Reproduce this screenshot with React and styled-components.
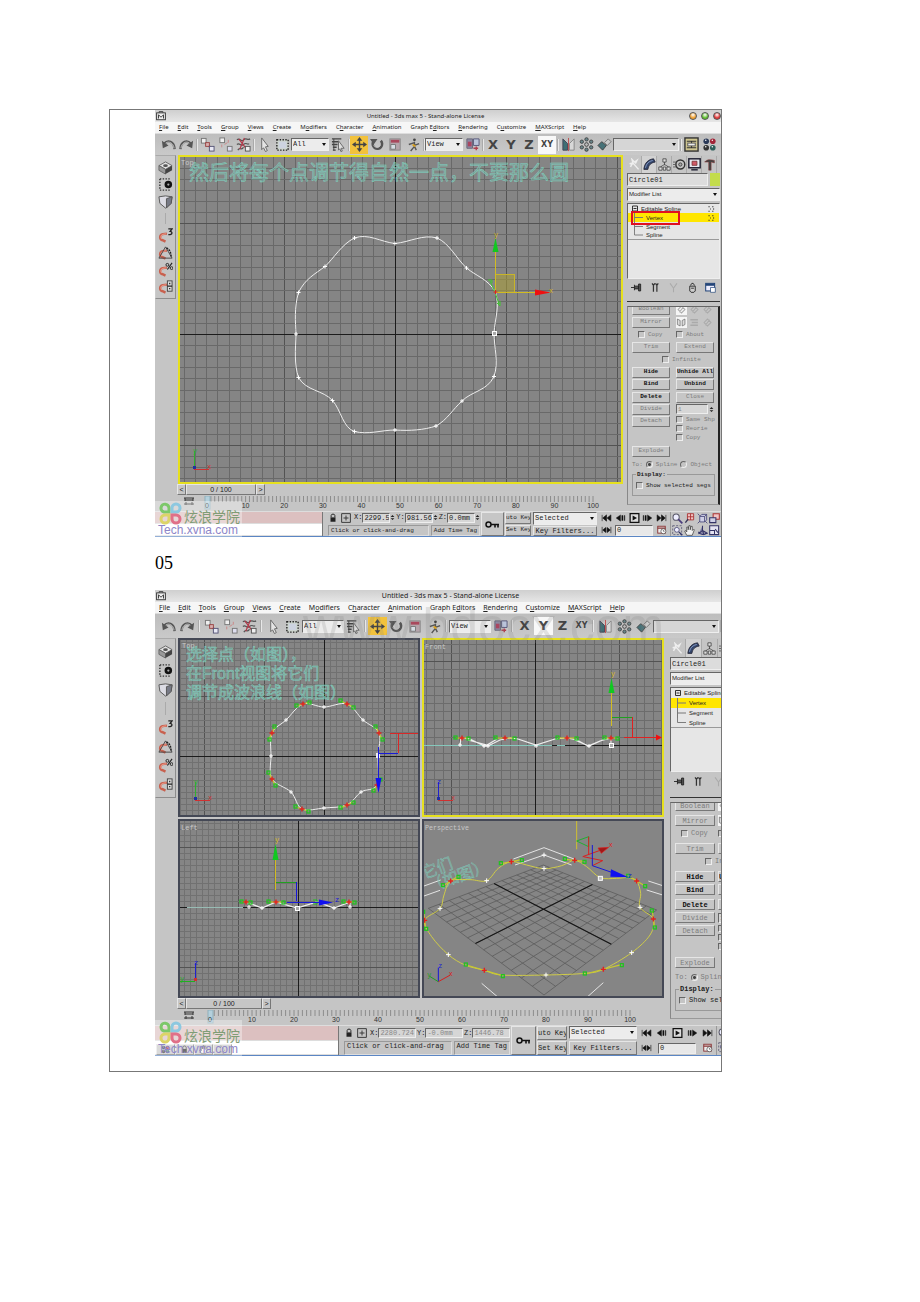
import React from "react";
import styled, { createGlobalStyle, css, ThemeProvider } from "styled-components";

const small = {
  menuFont: 6, codeFont: 6, toolbar: 22, tool: 18, sep: 3, select: 38, sideTool: 17,
  status: 25, mid: 154, key: 23, auto: 28, filter: 66, transport: 72, nav: 51,
  panel: 98, tab: 16, treeRow: 9, listHeight: 76, panelRow: 12, groupGap: 1, panelButton: 38, panelGap: 6,
  rolloutTop: 11, explodeTop: 5, thumb: 70, menuGap: 9,
};

const large = {
  menuFont: 7, codeFont: 7, toolbar: 25, tool: 19, sep: 5, select: 42, sideTool: 19,
  status: 30, mid: 168, key: 25, auto: 32, filter: 70, transport: 78, nav: 51,
  panel: 101, tab: 17, treeRow: 10, listHeight: 85, panelRow: 13, groupGap: 2, panelButton: 40, panelGap: 3,
  rolloutTop: 13, explodeTop: 4, thumb: 76, menuGap: 8,
};

const GlobalStyle = createGlobalStyle`
  * {
    box-sizing: border-box;
  }

  body {
    margin: 0;
    background: #fff;
    color: #222;
    font-family: "Liberation Sans", "Noto Sans CJK SC", sans-serif;
  }

  button, input, select {
    margin: 0;
    padding: 0;
    min-width: 0;
    font: inherit;
    color: inherit;
    border-radius: 0;
  }
`;

const mono = css`
  font-family: "Liberation Mono", "Noto Sans CJK SC", monospace;
  font-size: ${({ theme }) => theme.codeFont}px;
  line-height: 9px;
`;

const raised = css`
  border: 1px solid;
  border-color: #e6e6e6 #777 #777 #e6e6e6;
  background: #c6c6c6;
`;

const sunken = css`
  border: 1px solid;
  border-color: #666 #eee #eee #666;
`;

const Page = styled.main`
  padding: 109px 198px 200px 109px;
`;

const Cell = styled.article`
  border: 1px solid #777;
  padding: 0 0 15px 45px;
  overflow: hidden;
`;

const Step = styled.p`
  margin: 0;
  font-family: "Liberation Serif", serif;
  font-size: 18px;
  line-height: 53px;
  color: #000;
`;

const Clip = styled.div`
  position: relative;
  overflow: hidden;
`;

const AppWindow = styled.section`
  position: relative;
  margin-right: -${({ $overflow }) => $overflow || 0}px;
  background: #c5c5c5;
  border-bottom: 1px solid #5b86c4;
`;

const TitleBar = styled.header`
  display: flex;
  align-items: center;
  height: 12px;
  padding: 0 0 0 1px;
  background: linear-gradient(#cfcfcf, #e6e6e6);
  font-family: "Noto Sans", sans-serif;
  font-size: ${({ theme }) => theme.menuFont}px;
  line-height: 10px;

  h2 {
    flex: 1;
    margin: 0;
    padding-right: ${({ $shift }) => $shift}px;
    text-align: center;
    font: inherit;
  }
`;

const Lamp = styled.button`
  flex: none;
  width: 8px;
  height: 8px;
  margin-left: 4px;
  border: 1px solid #555;
  border-radius: 50%;
  background: radial-gradient(circle at 50% 30%, #fff, ${({ $color }) => $color} 60%);
`;

const MenuBar = styled.nav`
  display: flex;
  align-items: center;
  gap: ${({ theme }) => theme.menuGap}px;
  height: 11px;
  padding-left: 4px;
  background: #f6f6f6;
  font-family: "Noto Sans", sans-serif;
  font-size: ${({ theme }) => theme.menuFont}px;
  line-height: 9px;

  a {
    color: #222;
    text-decoration: none;
    white-space: nowrap;
  }
`;

const ToolBar = styled.div`
  display: flex;
  align-items: center;
  height: ${({ theme }) => theme.toolbar}px;
  padding-left: 4px;
  border-top: 1px solid #ddd;
  background: linear-gradient(#bdbdbd, #c9c9c9);
`;

const Tool = styled.button`
  flex: none;
  display: grid;
  place-items: center;
  width: ${({ theme }) => theme.tool}px;
  height: 18px;
  border: 0;
  background: ${({ $on }) => $on || "transparent"};

  svg {
    width: 15px;
    height: 15px;
  }
`;

const Divider = styled.i`
  flex: none;
  width: ${({ theme }) => theme.sep}px;
  height: 12px;
  background: linear-gradient(90deg, transparent 1px, #aaa 1px, #aaa 2px, #e8e8e8 2px, #e8e8e8 3px, transparent 3px);
`;

const selectWidths = {
  tool: ({ theme }) => `${theme.select}px`,
  sets: () => "66px",
  fill: () => "100%",
};

const SelectBox = styled.span`
  position: relative;
  flex: none;
  display: block;
  width: ${({ $kind = "tool", theme }) => selectWidths[$kind]({ theme })};
  height: 13px;

  select {
    display: block;
    width: 100%;
    height: 100%;
    padding: 0 8px 1px 1px;
    appearance: none;
    ${sunken}
    background: ${({ $kind }) => ($kind === "sets" ? "#d6d6d6" : "#ececec")};
    font-family: ${({ $sans }) => ($sans ? '"Liberation Sans", sans-serif' : '"Liberation Mono", monospace')};
    font-size: ${({ $sans }) => ($sans ? 6 : 7)}px;
  }

  &::after {
    content: "";
    position: absolute;
    right: 3px;
    top: 5px;
    border: 2px solid transparent;
    border-top: 3px solid #111;
    pointer-events: none;
  }
`;

const Main = styled.div`
  display: flex;
`;

const Work = styled.div`
  flex: 1;
  min-width: 0;
  padding-right: ${({ $pad }) => $pad || 0}px;
`;

const WorkRow = styled.div`
  display: flex;
  align-items: flex-start;
`;

const SideTools = styled.div`
  flex: none;
  width: 21px;
  margin: 0 2px 0 0;
  padding: 3px 0;
  border: 1px solid;
  border-color: #aaa #8d8d8d #8d8d8d #ccc;
  display: flex;
  flex-direction: column;
`;

const SideTool = styled.button`
  display: grid;
  place-items: center;
  height: ${({ theme }) => theme.sideTool}px;
  border: 0;
  background: transparent;

  svg {
    width: 15px;
    height: 15px;
  }
`;

const SideGap = styled.i`
  align-self: center;
  width: 1px;
  height: ${({ theme }) => theme.sideTool - 6}px;
  margin: 3px 0;
  background: #aaa;
`;

const Views = styled.div`
  flex: 1;
  display: grid;
  grid-template-columns: repeat(${({ $cols }) => $cols}, 1fr);
  gap: 2px;
`;

const View = styled.figure`
  margin: 0;
  border: 2px solid ${({ $active }) => ($active ? "#e6e01e" : "#444855")};
  background: #858585;

  svg {
    display: block;
    width: 100%;
    height: auto;
  }
`;

const Label = styled.text`
  font-family: "Liberation Mono", monospace;
  font-size: ${({ $size }) => $size || 7}px;
  fill: ${({ $color }) => $color || "#c8c8c8"};
`;

// outlined spline text lying in the scene
const Note = styled.text`
  font-family: "Liberation Sans", "Noto Sans CJK SC", sans-serif;
  font-size: ${({ $size }) => $size}px;
  fill: #82b4aa;
  fill-opacity: 0.45;
  stroke: #7ce0cc;
  stroke-opacity: 0.8;
  stroke-width: ${({ $line }) => $line || 0.5}px;
`;

const TimeRow = styled.div`
  display: flex;
  height: 12px;
  margin-left: 22px;
`;

const TimeButton = styled.button`
  ${raised}
  width: ${({ $width }) => $width || 9}px;
  height: 11px;
  line-height: 8px;
  font-family: "Liberation Sans", sans-serif;
  font-size: 7px;
  text-align: center;
`;

const Track = styled.svg`
  display: block;
  width: calc(100% - 23px);
  margin-left: 23px;
  height: 15px;

  text {
    font-size: 7px;
    fill: #333;
    text-anchor: middle;
  }
`;

const Panel = styled.aside`
  flex: none;
  width: ${({ theme }) => theme.panel}px;
  padding: 1px 1px 6px 4px;
  display: flex;
  flex-direction: column;
`;

const Tabs = styled.div`
  display: flex;
  height: ${({ theme }) => theme.tab + 1}px;
`;

const Tab = styled.button`
  flex: none;
  display: grid;
  place-items: center;
  width: ${({ theme }) => theme.tab - 1}px;
  border: solid #aaa;
  border-width: 0 1px 0 0;
  background: ${({ $on }) => ($on ? "#d2d2d2" : "transparent")};

  svg {
    width: 13px;
    height: 13px;
  }
`;

const NameRow = styled.div`
  display: flex;
  gap: 2px;
  height: 13px;
  margin: 0 0 2px;

  input {
    flex: 1;
    ${sunken}
    background: #dcdcdc;
    font-family: "Liberation Mono", monospace;
    font-size: 7px;
    padding-left: 1px;
  }
`;

const Swatch = styled.button`
  width: 10px;
  border: 0;
  background: #c3dc4c;
`;

const Tree = styled.ul`
  position: relative;
  flex: none;
  height: ${({ theme }) => theme.listHeight}px;
  margin: 2px 0 0;
  padding: 0;
  list-style: none;
  background: #e6e6e6;
  ${sunken}
  font-size: 6px;
`;

const Branch = styled.li`
  display: flex;
  align-items: center;
  gap: 3px;
  height: ${({ theme }) => theme.treeRow}px;
  padding-left: 4px;
  background: ${({ $on }) => ($on ? "#ffe600" : "transparent")};
  border-bottom: ${({ $last }) => ($last ? "1px solid #999" : "0")};
  white-space: nowrap;

  svg {
    flex: none;
    width: ${({ $leaf }) => ($leaf ? 11 : 6)}px;
    height: 100%;
  }

  svg:last-child {
    width: 7px;
    height: 6px;
    margin: 0 4px 0 auto;
  }
`;

const RedBox = styled.i`
  position: absolute;
  left: 3px;
  top: 7px;
  width: 49px;
  height: 14px;
  border: 2px solid #e01020;
`;

const StackTools = styled.div`
  display: flex;
  justify-content: space-between;
  align-items: center;
  height: ${({ theme }) => theme.panelRow + 3}px;
  margin-top: 1px;
  padding: 0 4px;

  button {
    border: 0;
    padding: 0;
    background: none;
  }

  svg {
    display: block;
    width: 11px;
    height: 11px;
  }
`;

const Rollout = styled.div`
  flex: 1;
  margin-top: ${({ theme }) => theme.rolloutTop}px;
  padding: 0 3px 0 4px;
  border: solid;
  border-width: 1px 2px 1px 1px;
  border-color: #666 #222 #999 #888;
  box-shadow: 0 -4px 0 #c5c5c5, 0 -5px 0 #333;
  display: flex;
  flex-direction: column;
  gap: ${({ theme }) => theme.groupGap}px;
  overflow: hidden;
  ${mono}
  color: #222;
`;

const Group = styled.div`
  flex: none;
  display: grid;
  grid-template-columns: repeat(2, ${({ theme }) => theme.panelButton}px);
  grid-auto-rows: ${({ theme }) => theme.panelRow}px;
  column-gap: ${({ theme }) => theme.panelGap}px;
  align-items: center;
`;

const CutGroup = styled(Group)`
  margin-top: -4px;
`;

const ExplodeGroup = styled(Group)`
  margin-top: ${({ theme }) => theme.explodeTop}px;
`;

const PanelButton = styled.button`
  ${raised}
  height: 11px;
  line-height: 8px;
  text-align: center;
  white-space: nowrap;
  overflow: hidden;
  color: ${({ disabled }) => (disabled ? "#7c7c7c" : "#111")};
  font-weight: ${({ disabled }) => (disabled ? 400 : 700)};
`;

const Check = styled.label`
  display: flex;
  align-items: center;
  gap: 3px;
  height: ${({ $tight }) => ($tight ? "9px" : "auto")};
  grid-column: ${({ $wide }) => ($wide ? "span 2" : "auto")};
  padding-left: ${({ $indent }) => $indent || 0}px;
  white-space: nowrap;
  color: ${({ $dark }) => ($dark ? "#222" : "#7c7c7c")};

  input {
    flex: none;
    width: 7px;
    height: 7px;
    appearance: none;
    border: 1px solid;
    border-color: #666 #eee #eee #666;
    border-radius: ${({ $round }) => ($round ? "50%" : 0)};
  }

  input[type="radio"]:checked {
    background: radial-gradient(#444 1px, transparent 2px);
  }
`;

const Stack = styled.div`
  grid-row: span 2;
  align-self: start;
`;

const IconRow = styled.div`
  display: flex;
  gap: 2px;
  align-items: center;

  svg {
    width: 11px;
    height: 11px;
  }

  svg:first-child {
    background: #f5f5f5;
  }
`;

const Spin = styled.label`
  display: flex;
  align-items: center;
  gap: 1px;

  input {
    flex: 1;
    width: 0;
    height: 10px;
    padding-left: 1px;
    ${sunken}
    background: #d6d6d6;
    color: ${({ $off }) => ($off ? "#888" : "#222")};
  }

  svg {
    flex: none;
    width: 5px;
    height: 9px;
  }
`;

const ToRow = styled.div`
  display: flex;
  gap: 3px;
  height: ${({ theme }) => theme.panelRow}px;
  align-items: center;
  color: #7c7c7c;
`;

const Display = styled.fieldset`
  margin: 0;
  padding: 3px 0 5px 3px;
  min-width: 0;
  border: 1px solid #999;

  legend {
    padding: 0 1px;
    font-weight: 700;
    line-height: 7px;
  }
`;

const StatusBar = styled.footer`
  display: flex;
  height: ${({ theme }) => theme.status}px;
  border-top: 1px solid #ddd;
  ${mono}
`;

const Column = styled.div`
  flex: none;
  width: ${({ $slot, theme }) => theme[$slot]}px;
  display: grid;
  grid-template-rows: 1fr 1fr;
  gap: 1px;
  padding: 0 1px;
`;

const Listener = styled.div`
  flex: 1;
  display: grid;
  grid-template-rows: 1fr 1fr;
  margin-right: 4px;
  border-right: 1px solid #777;

  input {
    width: 100%;
    border: 0;
    border-bottom: 1px solid #ddd;
    background: #dcc0c0;
  }

  input:last-child {
    background: #fff;
  }
`;

const Coords = styled.div`
  display: flex;
  align-items: center;
  gap: 1px;
  font-size: 7px;

  > svg {
    flex: none;
    width: 10px;
    height: 10px;
    margin-right: 2px;
  }

  label {
    flex: 1;
    gap: 0;
  }
`;

const Prompts = styled.div`
  display: flex;
  gap: 2px;

  span {
    flex: none;
    ${sunken}
    border-color: #999 #ddd #ddd #999;
    padding: 0 2px;
    white-space: nowrap;
    overflow: hidden;
  }

  span:first-child {
    flex: 1;
  }
`;

const KeyButton = styled.button`
  flex: none;
  display: grid;
  place-items: center;
  width: ${({ theme }) => theme.key}px;
  ${raised}

  svg {
    width: 15px;
    height: 9px;
  }
`;

const FlatButton = styled.button`
  ${raised}
  overflow: hidden;
  white-space: nowrap;
  line-height: 8px;
  font-size: ${({ $wide, theme }) => ($wide ? 7 : theme.codeFont)}px;
`;

const Transport = styled.div`
  display: flex;
  align-items: center;
  justify-content: space-between;
  padding: 0 2px;

  button {
    border: 0;
    background: none;
  }

  svg {
    display: block;
    width: 11px;
    height: 10px;
  }

  input {
    width: 38px;
    height: 11px;
    padding-left: 1px;
    ${sunken}
    background: #e8e8e8;
    font-size: 7px;
  }
`;

const NavTools = styled.div`
  flex: none;
  display: grid;
  grid-template-columns: repeat(4, 1fr);
  width: ${({ theme }) => theme.nav}px;
  border-left: 1px solid #999;

  button {
    display: grid;
    place-items: center;
    border: 0;
    background: none;
  }

  svg {
    width: 11px;
    height: 11px;
  }
`;

const Brand = styled.div`
  position: absolute;
  left: 0;
  bottom: 0;
  width: 87px;
  height: 36px;
  padding: 0 0 0 3px;
  background: rgba(255, 255, 255, 0.35);
  color: #7f9d75;
  font-size: 14px;
  line-height: 20px;

  div {
    display: flex;
    gap: 2px;
    height: 22px;
  }

  span {
    padding-top: 6px;
    white-space: nowrap;
  }

  svg {
    width: 24px;
    height: 24px;
  }

  p {
    margin: 0;
    font-size: 12px;
    line-height: 14px;
    color: #8e86c8;
  }
`;

const TaskIcons = styled.div`
  position: absolute;
  left: 1px;
  bottom: 1px;
  display: flex;

  button {
    ${raised}
    width: 19px;
    height: 11px;
    padding: 0;
  }

  svg {
    display: block;
    width: 9px;
    height: 9px;
    margin: auto;
  }
`;

const SiteMark = styled.div`
  position: absolute;
  left: 148px;
  top: 6px;
  font-size: 50px;
  line-height: 60px;
  color: rgba(130, 130, 130, 0.2);
  pointer-events: none;
`;

/* ---------- icons ---------- */

const magnet = (
  <>
    <path d="M9.500 6L5 6.500a3.300 3.300 0 0 0 0 6.500L8 14.500" stroke="#c8604e" strokeWidth="2.600" fill="none" />
    <path d="M8.500 6.200L5 6.800a3 3 0 0 0-1 5" stroke="#eda090" strokeWidth="1" fill="none" />
  </>
);

const art = {
  logo: <><rect x="1" y="3" width="14" height="11" fill="#eee" stroke="#333" strokeWidth="1.500" /><path d="M4 12V6l4 4 4-4v6M5 3V1h6v2" stroke="#444" strokeWidth="1.600" fill="none" /></>,
  undo: <><path d="M14.500 13C14 4 7 3 3.500 7" stroke="#555" strokeWidth="2.600" fill="none" /><path d="M1 4l1 8 6-3z" fill="#555" /><path d="M14 12C13 6 8 4 5 6.500" stroke="#ddd" strokeWidth="0.800" fill="none" /></>,
  redo: <><path d="M1.500 13C2 4 9 3 12.500 7" stroke="#555" strokeWidth="2.600" fill="none" /><path d="M15 4l-1 8-6-3z" fill="#555" /><path d="M2 12C3 6 8 4 11 6.500" stroke="#ddd" strokeWidth="0.800" fill="none" /></>,
  link: <><path d="M5 5l7 7" stroke="#a33" strokeWidth="2" /><rect x="1.500" y="1.500" width="5" height="5" fill="#eee" stroke="#777" /><rect x="6" y="6" width="4" height="4" fill="#d8b0b0" stroke="#944" /><rect x="10" y="10" width="5" height="5" fill="#e8e8f4" stroke="#557" /></>,
  unlink: <><rect x="2" y="1" width="5" height="5" fill="#eee" stroke="#777" /><rect x="10" y="10" width="5" height="5" fill="#dde" stroke="#777" /><path d="M4 8v3M7 8l3-2M11 3v3" stroke="#c88" /></>,
  bind: <><path d="M1 3c3-3 4 3 7 0s4 1 7-1M1 8c3-3 4 3 7 0s4 1 6-1M2 14c2-4 4 1 6-3" stroke="#555" strokeWidth="1.300" fill="none" /><path d="M3 2l9 12M9 1L4 13" stroke="#b23a4a" strokeWidth="1.300" /><rect x="10" y="10" width="5" height="5" fill="#eee" stroke="#555" /></>,
  arrow: <path d="M5 1l7 9-3 .500 2 4-2 1-2-4-2 2z" fill="#e4e4e4" stroke="#666" />,
  region: <><rect x="2" y="3" width="12" height="11" fill="#ccd4cc" stroke="#222" strokeWidth="1.500" strokeDasharray="1.500 1.500" /><rect x="4" y="5" width="8" height="7" fill="#cdd3e0" /></>,
  byName: <><path d="M1 2h10M1 5h7M1 8h6M2 11h4M2 14h3" stroke="#444" strokeWidth="1.500" /><path d="M3 2v12" stroke="#444" /><path d="M8 4l6 8h-3l1 3-1.500.500-1-3-1.500 1.500z" fill="#ddd" stroke="#666" /></>,
  move: <><path d="M8 2v12M2 8h12" stroke="#444" strokeWidth="1.500" /><path d="M8 0l3 4H5zM8 16l3-4H5zM0 8l4-3v6zM16 8l-4-3v6z" fill="#444" /></>,
  rotate: <><path d="M3.500 5a5 5 0 1 0 8-1" stroke="#555" strokeWidth="2.800" fill="none" /><path d="M0 2l8 0-4 6z" fill="#555" /><path d="M4 9a4 4 0 0 0 7 0" stroke="#ccc" fill="none" /></>,
  scale: <><rect x="2" y="2" width="11" height="12" fill="#b5a4ab" stroke="#888" /><path d="M3 8h5v5H3z" fill="#d6dde4" stroke="#777" /><path d="M3 3h9v3H3z" fill="#a9485d" /></>,
  person: <><circle cx="9" cy="3" r="1.500" fill="#444" /><path d="M9 5v5l-4 5M9 9l5-2M3 8l6-2M9 10l2 4" stroke="#555" strokeWidth="1.500" fill="none" /><path d="M7 8l3 2" stroke="#d8a020" strokeWidth="2" /></>,
  pivot: <><path d="M2 2h6v10H2z" fill="#8d89a4" stroke="#667" /><path d="M9 2h6v7H9z" fill="#bac4da" stroke="#557" /><path d="M9 12h5M12 10v4" stroke="#b04050" strokeWidth="1.500" /><path d="M3 5h4v5H3z" fill="#aa4660" /></>,
  mirror: <><path d="M2 2l5 5v7H2z" fill="#3f6f74" stroke="#445" /><path d="M8 1v14" stroke="#c05050" /><path d="M14 2L9 7v7h5z" fill="#d8d8d8" stroke="#888" /></>,
  array: <><circle cx="8" cy="8" r="2" fill="#bbb" stroke="#444" /><g fill="#69858a" stroke="#333" strokeWidth="0.800"><circle cx="8" cy="2.500" r="1.800" /><circle cx="8" cy="13.500" r="1.800" /><circle cx="3" cy="5" r="1.800" /><circle cx="13" cy="5" r="1.800" /><circle cx="3" cy="11" r="1.800" /><circle cx="13" cy="11" r="1.800" /></g></>,
  align: <><path d="M1 9l4-4 5 4-4 5z" fill="#477278" stroke="#444" /><path d="M8 6l4-4 3 3-4 4z" fill="#ccc" stroke="#777" /></>,
  track: <><rect x="1" y="1" width="14" height="14" fill="#cfc690" stroke="#333" strokeWidth="1.500" /><path d="M3 4.500h10M3 11.500h10M8 4v8" stroke="#333" strokeWidth="1.200" /><rect x="4" y="6.500" width="8" height="3" fill="#eee" stroke="#555" /></>,
  material: <><circle cx="4.500" cy="4.500" r="3" fill="#2b3a58" /><circle cx="11.500" cy="4.500" r="3" fill="#a02538" /><circle cx="4.500" cy="11.500" r="3" fill="#333" /><circle cx="11.500" cy="11.500" r="3" fill="#2c5f5a" /><g fill="#fff"><circle cx="4" cy="3.500" r=".8" /><circle cx="11" cy="3.500" r=".8" /><circle cx="4" cy="10.500" r=".8" /><circle cx="11" cy="10.500" r=".8" /></g></>,
  cube: <><path d="M1 6l7-4 7 4-7 4z" fill="#e2e2e2" stroke="#666" /><path d="M1 6v5l7 4v-5z" fill="#999" stroke="#666" /><path d="M15 6v5l-7 4v-5z" fill="#444" /><ellipse cx="8" cy="6" rx="2.500" ry="1.500" fill="#555" /></>,
  dots: <><path d="M2 2h12M2 14h12M2 2v12" stroke="#333" strokeWidth="1.500" strokeDasharray="1.500 1.500" /><circle cx="11" cy="8" r="4" fill="#111" /><circle cx="11" cy="8" r="1.200" fill="#aaa" /></>,
  shield: <><path d="M1 3l7-1 7 1-1 7-6 5-6-5z" fill="#dcdce4" stroke="#555" /><path d="M9 5l6-2-1 7-5 5z" fill="#777a86" stroke="#555" /></>,
  magnet3: <>{magnet}<path d="M11 1h4l-2 2.500c2 0 3 3 0 3.500h-2" stroke="#222" strokeWidth="1.400" fill="none" /></>,
  magnetA: <>{magnet}<path d="M1 14L8 2l7 12z" fill="none" stroke="#444" /><path d="M9 3c4 2 5 6 5 10" stroke="#222" strokeWidth="1.500" strokeDasharray="2 1" fill="none" /></>,
  magnetP: <>{magnet}<path d="M15 1l-5 7" stroke="#222" strokeWidth="1.200" /><circle cx="10" cy="3" r="1.500" fill="none" stroke="#222" /><circle cx="14.500" cy="6.500" r="1.500" fill="none" stroke="#222" /></>,
  magnetS: <>{magnet}<rect x="10" y="2" width="5" height="11" fill="#ddd" stroke="#444" /><path d="M10 7.500h5M12.500 4v1.500M12.500 9.500v1.500" stroke="#222" strokeWidth="1.300" /></>,
  create: <path d="M6 6l7 8M2 7l4-1-1-4 3 3 3-2-2 4M6 6L3 11" stroke="#eee" strokeWidth="1.800" fill="none" />,
  modify: <><path d="M1 14C2 6 6 2 13 1l2 4C9 6 7 9 6 14z" fill="#34466c" stroke="#223" /><path d="M3 12C4 7 7 4 12 3" stroke="#8fa4cc" fill="none" /></>,
  tree: <path d="M6 1h4v4H6zM8 5v4M3 11l5-3 5 3M1 11h4v4H1zM6.500 11h3v4h-3zM11 11h4v4h-4z" fill="#ddd" stroke="#444" />,
  motion: <><circle cx="9" cy="8" r="5.500" fill="none" stroke="#333" strokeWidth="1.800" /><circle cx="9" cy="8" r="2" fill="#aaa" stroke="#333" /><path d="M0 5h4M0 8h4M0 11h4" stroke="#555" /></>,
  display: <><rect x="1" y="1" width="14" height="11" fill="#e7e7f0" stroke="#223" strokeWidth="1.800" /><path d="M5 4h6v5H5z" fill="#d05868" stroke="#733" /><path d="M4 14.500h8" stroke="#334" strokeWidth="2" /></>,
  hammer: <path d="M2 5c3-4 8-3 12-2v3l-4-1v10H7V5z" fill="#444" stroke="#833" strokeWidth="0.600" />,
  pin: <path d="M0 8h5M5 4v8M5 6h6v4H5M11 3v10h3V3z" fill="#555" stroke="#222" strokeWidth="1.300" />,
  pipes: <path d="M5 3v11M10 3v11M3 2l2 3 2-3M8 2l2 3 2-3" stroke="#333" strokeWidth="1.800" fill="none" />,
  fork: <path d="M3 2l5 7 5-7M8 9v6" stroke="#aaa" strokeWidth="1.500" fill="none" />,
  trash: <path d="M4 6h8v7l-2 2H6l-2-2zM5 5l2-3h2l2 3M6 9h4" stroke="#222" strokeWidth="1.300" fill="#ccc" />,
  config: <><rect x="1" y="2" width="13" height="11" fill="#eef" stroke="#247" strokeWidth="1.500" /><path d="M1 4h13" stroke="#247" strokeWidth="3" /><path d="M8 8h7v7H8z" fill="#fff" stroke="#247" /></>,
  book: <path d="M2 3l4 2v8l-4-2zM13 3L9 5v8l4-2z" fill="#ddd" stroke="#666" />,
  lines: <path d="M2 4h11M4 8h9M2 12h11" stroke="#aaa" strokeWidth="2" />,
  ring: <path d="M3 8l5-5 5 5-5 5zM5 12l6-8" stroke="#aaa" strokeWidth="1.500" fill="none" />,
  spin: <><path d="M8 0l6 6H2zM8 16l6-6H2z" fill="#222" /></>,
  lock: <><path d="M4 7h8v7H4z" fill="#222" /><path d="M5 7V4c0-3 6-3 6 0v3" stroke="#222" strokeWidth="1.500" fill="none" /></>,
  plus: <path d="M1 1h14v14H1zM8 4v8M4 8h8" stroke="#333" strokeWidth="1.500" fill="none" />,
  zoom: <><circle cx="6" cy="6" r="4.500" fill="#eef" stroke="#556" strokeWidth="1.500" /><path d="M9 9l6 6" stroke="#4a3c7c" strokeWidth="2.500" /></>,
  zoomAll: <><path d="M5 1h9v9H5zM5 5.500h9M9.500 1v9" fill="#f2c4c4" stroke="#a33" strokeWidth="1.300" /><path d="M6 9l-4 5" stroke="#335" strokeWidth="2" /></>,
  extents: <path d="M4 5h7v8H4zM4 5l3-3h7l-3 3M14 2v8l-3 3M1 1l3 3M15 15l-3-3M1 15l3-3" fill="#cfd0e6" stroke="#447" strokeWidth="1.200" />,
  extentsAll: <><path d="M6 1h9v8H6z" fill="#f2c4c4" stroke="#a33" strokeWidth="1.500" /><path d="M1 7h9v7H1z" fill="#cfd0e6" stroke="#336" strokeWidth="1.500" /></>,
  zoomBox: <><rect x="1" y="1" width="13" height="13" fill="none" stroke="#446" strokeDasharray="3 2" /><circle cx="7" cy="7" r="3.500" fill="#eef" stroke="#336" /><path d="M10 10l5 5" stroke="#336" strokeWidth="2" /></>,
  hand: <path d="M4 15L1 9l2-1 1 2V3h2v4l1-6h2v6l1-5h2v6l2-2 1 1-3 8z" fill="#f4f4f4" stroke="#333" />,
  orbit: <path d="M8 1v7l-6 5M8 8l7 4-5 2zM2 10c3 5 9 5 12 1" fill="#88a" stroke="#336" strokeWidth="1.500" />,
  minmax: <path d="M1 1h13v13H1zM1 8h7v6M9 6l4 5" fill="#e4e4f2" stroke="#336" strokeWidth="1.500" />,
  time: <><rect x="2" y="2" width="12" height="11" fill="#eee" stroke="#833" strokeWidth="1.500" /><path d="M2 5h12" stroke="#833" strokeWidth="2" /><circle cx="11" cy="10" r="4" fill="#fff" stroke="#333" /><path d="M11 8v2h2" stroke="#333" fill="none" /></>,
  first: <path d="M1 3v10M8 3v10L2 8zM15 3v10L9 8z" fill="#111" stroke="#111" />,
  prev: <path d="M8 3v10L1 8zM10 4h2v8h-2zM14 4h1v8h-1z" fill="#111" stroke="#111" strokeWidth="0.600" />,
  play: <><rect x="1" y="1" width="14" height="14" fill="#ddd" stroke="#111" strokeWidth="2" /><path d="M5 4v8l7-4z" fill="#111" /></>,
  next: <path d="M8 3v10l7-5zM4 4h2v8H4zM1 4h1v8H1z" fill="#111" stroke="#111" strokeWidth="0.600" />,
  last: <path d="M15 3v10M8 3v10l6-5zM1 3v10l6-5z" fill="#111" stroke="#111" />,
  keyMode: <path d="M1 3v10M15 3v10M7 4v8L2 8zM9 4v8l5-4z" fill="#111" stroke="#111" />,
};

const Icon = ({ name }) => <svg viewBox="0 0 16 16" width="10" height="10" aria-hidden="true">{art[name]}</svg>;

const AxisName = styled.span`
  font-family: "DejaVu Sans", sans-serif;
  font-size: ${({ $pair }) => ($pair ? 8 : 13)}px;
  line-height: 14px;
  font-weight: 700;
  color: #444;
`;

/* ---------- viewport drawing ---------- */

// closed Catmull-Rom curve through the points
const curve = (pts) => {
  const at = (i) => pts[(i + pts.length) % pts.length];
  let d = `M${pts[0]}`;
  pts.forEach((p, i) => {
    const [a, b, c] = [at(i - 1), at(i + 1), at(i + 2)];
    d += `C${p[0] + (b[0] - a[0]) / 6} ${p[1] + (b[1] - a[1]) / 6} ${b[0] - (c[0] - p[0]) / 6} ${b[1] - (c[1] - p[1]) / 6} ${b[0]} ${b[1]}`;
  });
  return d;
};

// lines are snapped to the middle of a pixel
const snap = (n) => Math.floor(n) + 0.5;

const Grid = ({ x, y, w, h, cx, cy, step, ink = "#717171" }) => {
  const lines = [];
  const color = (i) => (i % 10 === 0 ? "#535353" : ink);
  for (let i = Math.ceil((x - cx) / step); cx + i * step < x + w; i++) {
    lines.push(<path key={`v${i}`} d={`M${snap(cx + i * step)} ${y}v${h}`} stroke={color(i)} />);
  }
  for (let i = Math.ceil((y - cy) / step); cy + i * step < y + h; i++) {
    lines.push(<path key={`h${i}`} d={`M${x} ${snap(cy + i * step)}h${w}`} stroke={color(i)} />);
  }
  lines.push(<path key="axis" d={`M${cx} ${y}v${h}M${x} ${cy}h${w}`} stroke="#1c1c1c" />);
  return <g strokeWidth="1">{lines}</g>;
};

const Crosses = ({ pts, color = "#fff", r = 2, width = 1 }) => (
  <path d={pts.map(([x, y]) => `M${x - r} ${y}h${2 * r}M${x} ${y - r}v${2 * r}`).join("")} stroke={color} strokeWidth={width} />
);

// green bezier handles on both sides of a selected vertex
const Handles = ({ pts, unit = 1 }) => pts.map(([x, y, dx, dy]) => (
  <g key={`${x}-${y}`} fill="none" stroke="#1fc41f" strokeWidth={1.2 * unit}>
    <path d={`M${x - dx} ${y - dy}L${x + dx} ${y + dy}`} stroke="#c8c830" />
    <rect x={x - dx - 2 * unit} y={y - dy - 2 * unit} width={3 * unit} height={3 * unit} />
    <rect x={x + dx - unit} y={y + dy - unit} width={3 * unit} height={3 * unit} />
    <Crosses pts={[[x, y]]} color="#e02020" r={2.5 * unit} width={1.4 * unit} />
  </g>
));

const Tripod = ({ x, y, up = "#2020d0", side = "#d03030", left, upName, sideName }) => (
  <g fill="none">
    <path d={`M${x + 0.5} ${y}v-18`} stroke={up} />
    <path d={`M${x} ${y + 0.5}h${left ? -15 : 15}`} stroke={side} />
    <rect x={x - 1} y={y - 3} width="3" height="3" fill={left ? "#d03030" : "#2030a0"} />
    <Label x={x - 1} y={y - 16} $color={up}>{upName}</Label>
    <Label x={left ? x - 15 : x + 13} y={y} $color={side}>{sideName}</Label>
  </g>
);

const BIG = [
  [395, 243.5], [354.5, 238], [325, 266.5], [298.5, 292.5], [296, 334], [298.5, 377.5],
  [332.5, 400.5], [354.5, 431.5], [395, 430], [436, 426], [462, 401], [494, 376.5],
  [494, 333], [466.5, 268], [437, 238],
];

const BIG_PATH = "M395 243.500C381 242 368 233 354.500 238C342 244 334 258 325 266.500C315 274 305 279 298.500 292.500C294 308 295.500 322 296 334C295.500 350 294 364 298.500 377.500C306 391 323 390 332.500 400.500C341 410 343 428 354.500 431.500C368 435 382 430 395 430C410 431 424 430 436 426C447 420 453 409 462 401C472 391 487 391 494 376.500C499 362 494 348 494 333C495 318 500 306 495.500 292C488 279 476 276 466.500 268C456 258 449 243 437 238C423 234 410 242 395 243.500Z";

const SMALL_WHITE = [[324, 707], [363, 720], [286, 720], [271, 756], [291, 792], [324, 808], [361, 792]];
const SMALL_RED = [
  [303, 704, 6, -2], [347, 704, 6, 3], [379, 733, 3, 6], [272, 733, -3, 6],
  [272, 779, 3, 6], [302, 809, 6, 2], [347, 805, 6, -3], [377, 785, 3, -6],
];

const BigTop = () => (
  <View $active>
    <svg viewBox="180 157 441 325" role="img" aria-label="Top">
      <Grid x={180} y={157} w={441} h={325} cx={395.5} cy={334.5} step={11.1} ink="#696969" />
      <Label x="181" y="165">Top</Label>
      <Note x="189" y="180" $size={20}>然后将每个点调节得自然一点，不要那么圆</Note>
      <path d={BIG_PATH} fill="none" stroke="#ededed" />
      <Crosses pts={BIG} />
      <rect x="492.500" y="331.500" width="4" height="4" fill="#aaa" stroke="#fff" />
      <rect x="495.500" y="274.500" width="19" height="18" fill="#a89d3c" fillOpacity=".6" stroke="#c8b428" />
      <path d="M495.500 292V250M495.500 292.500H538" stroke="#d2bc20" fill="none" />
      <path d="M495.500 238l3 14h-6z" fill="#10c820" />
      <path d="M551 292.500l-16-3v6z" fill="#ee1010" />
      <Label x="494" y="237" $color="#d8b820">y</Label>
      <Label x="549" y="293" $color="#d8b820">x</Label>
      <path d="M490 281l5 11 4 12M488 280h4v3M497 303l3 3v-5" stroke="#40c830" fill="none" />
      <Crosses pts={[[495.5, 292]]} color="#e02020" />
      <Tripod x={194} y={469} up="#30b030" upName="y" sideName="x" />
    </svg>
  </View>
);

const SmallTop = () => (
  <View>
    <svg viewBox="180 640 238 175" role="img" aria-label="Top">
      <Grid x={180} y={640} w={238} h={175} cx={324.5} cy={756.5} step={6} />
      <Label x="182" y="648">Top</Label>
      {["选择点（如图），", "在Front视图将它们", "调节成波浪线（如图）"].map((line, i) => (
        <Note key={line} x="186" y={660 + i * 19} $size={16}>{line}</Note>
      ))}
      <path
        d={curve([[324, 707], [347, 704], [363, 720], [379, 733], [378, 756], [377, 785], [361, 792], [347, 805], [324, 808], [302, 809], [291, 792], [272, 779], [271, 756], [272, 733], [286, 720], [303, 704]])}
        fill="none" stroke="#eee"
      />
      <Handles pts={SMALL_RED} />
      <Crosses pts={SMALL_WHITE} />
      <rect x="376" y="753" width="4" height="5" fill="#eee" />
      <path d="M390 733.500h28M398.500 733v20" stroke="#d82828" fill="none" />
      <path d="M398 753.500h-20M378.500 747v32" stroke="#1818d8" fill="none" />
      <path d="M378.500 793l-3-15h6z" fill="#1010f0" />
      <Tripod x={195} y={800} up="#30b030" upName="y" sideName="x" />
    </svg>
  </View>
);

const Front = () => (
  <View $active>
    <svg viewBox="424 640 238 175" role="img" aria-label="Front">
      <Grid x={424} y={640} w={238} h={175} cx={535.5} cy={745.5} step={8.4} ink="#6c6c6c" />
      <Label x="425" y="649">Front</Label>
      <path d="M424 745.500h128M557 745.500h8" stroke="#86c8bc" />
      <path d="M460 745l1-7 9 1 14 7 4 0 12-6 10-2 8 1 18 6 19-6 12-1 10 2 11 6 12-5 11-3v9M468 740l19 5 10-6M575 740l14 6 18-8" fill="none" stroke="#eee" strokeWidth="1.200" />
      <Handles pts={[[462, 738, 6, 0], [505, 738, 9, 0], [567, 738, 9, 0], [611, 738, 6, 0]]} />
      <Crosses pts={[[460, 745], [484, 746], [488, 746], [536, 746], [589, 746]]} />
      <rect x="609.500" y="743.500" width="4" height="4" fill="#aaa" stroke="#fff" />
      <path d="M611.500 726v-36" stroke="#d2bc20" />
      <path d="M611.500 678l3 15h-6z" fill="#10c820" />
      <path d="M612 717.500h20" stroke="#20a020" />
      <path d="M632.500 717v20M624 737.500h32" stroke="#e02020" />
      <path d="M662 737.500l-6-3v6z" fill="#f01010" />
      <Label x="611" y="676" $color="#d8b820">y</Label>
      <Tripod x={438} y={800} upName="z" sideName="x" />
    </svg>
  </View>
);

const Left = () => (
  <View>
    <svg viewBox="180 822 238 175" role="img" aria-label="Left">
      <Grid x={180} y={822} w={238} h={175} cx={298.5} cy={908.5} step={6} />
      <Label x="181" y="831">Left</Label>
      <path d="M187 908.500h56" stroke="#98bcb4" />
      <path d="M246 903l16 6 14-6 21 6 20-6 17 6 16-6v5" fill="none" stroke="#eee" strokeWidth="1.200" />
      <Handles pts={[[246, 903, 4, 0], [276, 903, 7, 0], [349, 903, 5, 0]]} />
      <path d="M313 901h4v4h-4" fill="none" stroke="#1fc41f" />
      <Crosses pts={[[249, 908], [262, 909], [334, 909], [350, 908]]} />
      <rect x="295.500" y="907.500" width="4" height="4" fill="#aaa" stroke="#fff" />
      <path d="M275.500 891v-32" stroke="#d2bc20" />
      <path d="M275.500 845l3 16h-6z" fill="#10c820" />
      <path d="M276 883.500h20" stroke="#20a020" />
      <path d="M296.500 883v19M287 903.500h32" stroke="#1818d8" />
      <path d="M333 903.500l-14-3v6z" fill="#1010f0" />
      <Label x="275" y="843" $color="#d8b820">y</Label>
      <Label x="335" y="903" $color="#1818d8">z</Label>
      <Tripod x={195} y={982} left side="#20b020" upName="z" sideName="y" />
    </svg>
  </View>
);

// ground plane seen from the camera: unit square mapped to the four corners
const ground = (() => {
  const [[x0, y0], [x1, y1], [x2, y2], [x3, y3]] = [[370, 150], [710, 285], [372, 540], [25, 280]];
  const [dx1, dx2, sx] = [x1 - x2, x3 - x2, x0 - x1 + x2 - x3];
  const [dy1, dy2, sy] = [y1 - y2, y3 - y2, y0 - y1 + y2 - y3];
  const det = dx1 * dy2 - dx2 * dy1;
  const g = (sx * dy2 - dx2 * sy) / det;
  const h = (dx1 * sy - sx * dy1) / det;
  return (u, v) => {
    const w = g * u + h * v + 1;
    return [
      ((x1 - x0 + g * x1) * u + (x3 - x0 + h * x3) * v + x0) / w,
      ((y1 - y0 + g * y1) * u + (y3 - y0 + h * y3) * v + y0) / w,
    ];
  };
})();

const Perspective = () => {
  const n = 14;
  const lines = Array.from({ length: n + 1 }, (_, i) => i / n);
  return (
    <View>
      <svg viewBox="12 18 714 525" role="img" aria-label="Perspective">
        <g strokeWidth="2.500" stroke="#5e5e5e">
          {lines.map((t) => <path key={t} d={`M${ground(t, 0)}L${ground(t, 1)}M${ground(0, t)}L${ground(1, t)}`} />)}
        </g>
        <path d={`M${ground(0.5, 0)}L${ground(0.5, 1)}M${ground(0, 0.5)}L${ground(1, 0.5)}`} stroke="#151515" strokeWidth="3.500" />
        <Label x="15" y="44" $size={20}>Perspective</Label>
        <g fill="none" stroke="#e4e4e4" strokeWidth="3">
          <path d="M280 132l92-34 90 34M285 150l87-30 83 30M12 213l50-18M12 243l48-17M685 198l43 14M680 225l48 15M185 505l47 40M550 503l-47 42" />
        </g>
        <Note x="12" y="192" transform="rotate(-20 12 192)" $size={48} $line={1}>它们</Note>
        <Note x="30" y="232" transform="rotate(-20 30 232)" $size={48} $line={1}>（如图）</Note>
        <path
          d={curve([[274, 140], [320, 150], [372, 161], [425, 152], [464, 136], [500, 155], [541, 188], [590, 190], [625, 188], [650, 198], [662, 235], [660, 277], [700, 312], [690, 360], [635, 413], [550, 463], [495, 475], [378, 480], [245, 480], [193, 466], [135, 450], [85, 419], [35, 365], [14, 316], [60, 281], [72, 240], [92, 198], [150, 194], [200, 197], [235, 160]])}
          fill="none" stroke="#d0cc48" strokeWidth="3"
        />
        <Handles
          unit={3}
          pts={[[274, 140, 30, -6], [464, 136, 28, 3], [92, 198, 22, -14], [650, 198, 24, 14], [700, 312, 3, 24], [550, 463, 54, -14], [193, 466, 54, 16], [14, 316, 3, 24]]}
        />
        <Crosses pts={[[372, 161], [372, 120], [200, 197], [60, 281], [85, 419], [378, 480], [635, 413], [660, 277]]} r={7} width={3} />
        <rect x="535" y="184" width="12" height="12" fill="#bbb" stroke="#fff" strokeWidth="3" />
        <path d="M470 18v85" stroke="#d0c030" strokeWidth="3" />
        <path d="M470 78l36-13v30z" fill="none" stroke="#20b030" strokeWidth="3" />
        <path d="M506 65v55M488 125l55-20M490 125l58 12-31 15" fill="none" stroke="#d82020" strokeWidth="3" />
        <path d="M534 99l32-2-22 18z" fill="#a01818" stroke="#e02020" strokeWidth="2" />
        <path d="M517 90v62l58 20" fill="none" stroke="#1818d8" strokeWidth="3" />
        <path d="M573 163l52 24-54-2z" fill="#1010f0" />
        <Label x="566" y="97" $size={20} $color="#e02020">x</Label>
        <Label x="624" y="190" $size={20} $color="#1818d8">z</Label>
        <g fill="none" strokeWidth="3">
          <path d="M55 500v-42" stroke="#1818d8" />
          <path d="M55 500l36-20" stroke="#d82020" />
          <path d="M55 500l-26-16" stroke="#20a020" />
        </g>
        <Label x="55" y="458" $size={20} $color="#1818d8">z</Label>
        <Label x="86" y="484" $size={20} $color="#d82020">x</Label>
        <Label x="22" y="486" $size={20} $color="#20a020">y</Label>
      </svg>
    </View>
  );
};

/* ---------- window parts ---------- */

const MENUS = ["_File", "_Edit", "_Tools", "_Group", "_Views", "_Create", "M_odifiers", "C_haracter", "_Animation", "Graph E_ditors", "_Rendering", "C_ustomize", "_MAXScript", "_Help"];

const Menu = () => (
  <MenuBar>
    {MENUS.map((item) => {
      const [before, rest] = item.split("_");
      return <a key={item} href="#menu">{before}<u>{rest[0]}</u>{rest.slice(1)}</a>;
    })}
  </MenuBar>
);

const Drop = ({ label, value, ...rest }) => (
  <SelectBox {...rest}>
    <select aria-label={label} defaultValue={value}><option>{value}</option></select>
  </SelectBox>
);

const Tools = ({ axis }) => {
  const icon = (name, on) => <Tool key={name} aria-label={name} $on={on}><Icon name={name} /></Tool>;
  return (
    <ToolBar>
      {["undo", "redo"].map((n) => icon(n))}
      <Divider />
      {["link", "unlink", "bind"].map((n) => icon(n))}
      <Divider />
      {["arrow", "region"].map((n) => icon(n))}
      <Drop label="Selection filter" value="All" />
      {icon("byName")}
      <Divider />
      {icon("move", "#f2c23c")}
      {["rotate", "scale", "person"].map((n) => icon(n))}
      <Divider />
      <Drop label="Reference coordinate system" value="View" />
      {icon("pivot")}
      <Divider />
      {["X", "Y", "Z", "XY"].map((n) => (
        <Tool key={n} $on={axis === n && "#f8f8f8"}><AxisName $pair={n === "XY"}>{n}</AxisName></Tool>
      ))}
      <Divider />
      {["mirror", "array", "align"].map((n) => icon(n))}
      <Drop label="Named selection sets" value="" $kind="sets" />
      <Divider />
      {["track", "material"].map((n) => icon(n))}
    </ToolBar>
  );
};

const Side = () => (
  <SideTools>
    {["cube", "dots", "shield"].map((n) => <SideTool key={n} aria-label={n}><Icon name={n} /></SideTool>)}
    <SideGap />
    {["magnet3", "magnetA", "magnetP", "magnetS"].map((n) => <SideTool key={n} aria-label={n}><Icon name={n} /></SideTool>)}
  </SideTools>
);

const Ruler = ({ width, zero, step }) => {
  const ticks = Array.from({ length: 101 }, (_, i) => zero + (i * step) / 10);
  return (
    <Track viewBox={`0 0 ${width} 15`} aria-label="Track bar">
      <path d={ticks.map((x) => `M${x} 0v6`).join("")} stroke="#8c8c8c" />
      <path d="M6 2h10M7 4h8M7 2v3M15 2v3M6 8h10M8 6v3M14 6v3" stroke="#333" fill="none" />
      <rect x={zero - 2} y="0" width="5" height="13" fill="#b4d0dc" stroke="#8fb0bc" />
      {Array.from({ length: 11 }, (_, i) => (
        <text key={i} x={zero + i * step} y="12">{i * 10}</text>
      ))}
    </Track>
  );
};

const Dots = () => (
  <svg viewBox="0 0 8 8"><path d="M0 1h1.500M5 1h1.500M2 4h1M6 4h1.500M0 7h1.500M5 7h1.500" stroke="#222" strokeWidth="1.500" /></svg>
);

const Leaf = ({ last }) => (
  <svg viewBox="0 0 11 10" preserveAspectRatio="none"><path d={last ? "M2.500 0v5H11" : "M2.500 0v10M2.500 5H11"} fill="none" stroke="#777" strokeWidth="1" /></svg>
);

const Off = ({ children }) => <PanelButton disabled>{children}</PanelButton>;

const CheckBox = ({ children, ...rest }) => (
  <Check {...rest}><input type="checkbox" />{children}</Check>
);

const CommandPanel = ({ marked, id }) => (
  <Panel>
    <Tabs>
      {["create", "modify", "tree", "motion", "display", "hammer"].map((n) => (
        <Tab key={n} aria-label={n} $on={n === "modify"}><Icon name={n} /></Tab>
      ))}
    </Tabs>
    <NameRow>
      <input aria-label="Object name" defaultValue="Circle01" />
      <Swatch aria-label="Object colour" />
    </NameRow>
    <Drop label="Modifier list" value="Modifier List" $kind="fill" $sans />
    <Tree>
      <Branch>
        <svg viewBox="0 0 6 9"><path d="M.500 2h5v5h-5zM1.500 4.500h3" fill="none" stroke="#333" /></svg>
        Editable Spline
        <Dots />
      </Branch>
      <Branch $leaf $on><Leaf />Vertex<Dots /></Branch>
      <Branch $leaf><Leaf /><span>Segment</span></Branch>
      <Branch $leaf $last><Leaf last /><span>Spline</span></Branch>
      {marked && <RedBox />}
    </Tree>
    <StackTools>
      {["pin", "pipes", "fork", "trash", "config"].map((n) => <button key={n} aria-label={n}><Icon name={n} /></button>)}
    </StackTools>
    <Rollout>
      <CutGroup>
        <Off>Boolean</Off>
        <IconRow><Icon name="ring" /><Icon name="ring" /><Icon name="ring" /></IconRow>
      </CutGroup>
      <Group>
        <Off>Mirror</Off>
        <IconRow><Icon name="book" /><Icon name="lines" /><Icon name="ring" /></IconRow>
        <CheckBox $indent={6}>Copy</CheckBox>
        <CheckBox>About</CheckBox>
      </Group>
      <Group>
        <Off>Trim</Off>
        <Off>Extend</Off>
        <CheckBox $wide $indent={30}>Infinite</CheckBox>
      </Group>
      <Group>
        <PanelButton>Hide</PanelButton>
        <PanelButton>Unhide All</PanelButton>
        <PanelButton>Bind</PanelButton>
        <PanelButton>Unbind</PanelButton>
      </Group>
      <Group>
        <PanelButton>Delete</PanelButton>
        <Off>Close</Off>
        <Off>Divide</Off>
        <Spin $off><input aria-label="Divisions" defaultValue="1" /><Icon name="spin" /></Spin>
        <Off>Detach</Off>
        <Stack>
          <CheckBox $tight>Same Shp</CheckBox>
          <CheckBox $tight>Reorie</CheckBox>
          <CheckBox $tight>Copy</CheckBox>
        </Stack>
      </Group>
      <ExplodeGroup>
        <Off>Explode</Off>
      </ExplodeGroup>
      <ToRow>
        To:
        <Check $round><input type="radio" name={`to-${id}`} defaultChecked />Spline</Check>
        <Check $round><input type="radio" name={`to-${id}`} />Object</Check>
      </ToRow>
      <Display>
        <legend>Display:</legend>
        <CheckBox $dark>Show selected segs</CheckBox>
      </Display>
    </Rollout>
  </Panel>
);

const Coord = ({ name, value, off }) => (
  <Spin $off={off}>{name}:<input defaultValue={value} />{!off && <Icon name="spin" />}</Spin>
);

const Status = ({ coords, off }) => (
  <StatusBar>
    <Listener>
      <input aria-label="Macro recorder" />
      <input aria-label="Script listener" />
    </Listener>
    <Column $slot="mid">
      <Coords>
        <Icon name="lock" />
        <Icon name="plus" />
        {["X", "Y", "Z"].map((n, i) => <Coord key={n} name={n} value={coords[i]} off={off} />)}
      </Coords>
      <Prompts><span>Click or click-and-drag</span><span>Add Time Tag</span></Prompts>
    </Column>
    <KeyButton aria-label="Set keys">
      <svg viewBox="0 0 15 9"><circle cx="3.500" cy="4.500" r="2.500" fill="none" stroke="#111" strokeWidth="1.500" /><path d="M6 4.500h8M10 4.500v3M13 4.500v3" stroke="#111" strokeWidth="1.600" /></svg>
    </KeyButton>
    <Column $slot="auto">
      <FlatButton>uto Key</FlatButton>
      <FlatButton>Set Key</FlatButton>
    </Column>
    <Column $slot="filter">
      <Drop label="Key set" value="Selected" $kind="fill" />
      <FlatButton $wide>Key Filters...</FlatButton>
    </Column>
    <Column $slot="transport">
      <Transport>
        {["first", "prev", "play", "next", "last"].map((n) => <button key={n} aria-label={n}><Icon name={n} /></button>)}
      </Transport>
      <Transport>
        <button aria-label="Key mode"><Icon name="keyMode" /></button>
        <input aria-label="Current frame" defaultValue="0" />
        <button aria-label="Time configuration"><Icon name="time" /></button>
      </Transport>
    </Column>
    <NavTools>
      {["zoom", "zoomAll", "extents", "extentsAll", "zoomBox", "hand", "orbit", "minmax"].map((n) => (
        <button key={n} aria-label={n}><Icon name={n} /></button>
      ))}
    </NavTools>
  </StatusBar>
);

const BrandMark = () => (
  <Brand>
    <div>
      <svg viewBox="0 0 24 24" fill="none" strokeWidth="3">
        <path d="M11 11H6a4 4 0 1 1 5-4z" stroke="#7dc86a" />
        <path d="M14 11V7a4 4 0 1 1 4 4z" stroke="#8cc8e0" />
        <path d="M11 14v4a4 4 0 1 1-4-4z" stroke="#dcd468" />
        <path d="M14 14h4a4 4 0 1 1-4 4z" stroke="#e07088" />
      </svg>
      <span>炫浪学院</span>
    </div>
    <p>Tech.xvna.com</p>
  </Brand>
);

const MaxWindow = ({ theme, overflow, cols, axis, marked, ruler, coords, off, lamps, titleShift, children }) => (
  <ThemeProvider theme={theme}>
    <AppWindow $overflow={overflow}>
      <TitleBar $shift={titleShift}>
        <Icon name="logo" />
        <h2>Untitled - 3ds max 5 - Stand-alone License</h2>
        {lamps && ["#f0a030", "#60c030", "#e03838"].map((c) => <Lamp key={c} $color={c} aria-label="Window control" />)}
      </TitleBar>
      <Menu />
      <Tools axis={axis} />
      <Main>
        <Work $pad={cols > 1 ? 2 : 0}>
          <WorkRow>
            <Side />
            <Views $cols={cols}>{children}</Views>
          </WorkRow>
          <TimeRow>
            <TimeButton>&lt;</TimeButton>
            <TimeButton $width={theme.thumb}>0 / 100</TimeButton>
            <TimeButton>&gt;</TimeButton>
          </TimeRow>
          <Ruler {...ruler} />
        </Work>
        <CommandPanel marked={marked} id={theme.tool} />
      </Main>
      <Status coords={coords} off={off} />
    </AppWindow>
  </ThemeProvider>
);

const App = () => (
  <Page>
    <GlobalStyle />
    <Cell>
      <Clip>
        <MaxWindow
          theme={small} cols={1} axis="XY" marked lamps titleShift={0}
          ruler={{ width: 445, zero: 29, step: 38.6 }}
          coords={["2299.597", "981.567m", "0.0mm"]}
        >
          <BigTop />
        </MaxWindow>
        <BrandMark />
      </Clip>
      <Step>05</Step>
      <Clip>
        <MaxWindow
          theme={large} overflow={46} cols={2} axis="Y" titleShift={32}
          ruler={{ width: 486, zero: 32, step: 42 }}
          coords={["2280.724", "-0.0mm", "1446.78"]} off
        >
          <SmallTop />
          <Front />
          <Left />
          <Perspective />
        </MaxWindow>
        <TaskIcons>
          {["material", "lock", "hand", "arrow"].map((n) => <button key={n} aria-label={n}><Icon name={n} /></button>)}
        </TaskIcons>
        <BrandMark />
        <SiteMark>www.bdocx.com</SiteMark>
      </Clip>
    </Cell>
  </Page>
);

export default App;
